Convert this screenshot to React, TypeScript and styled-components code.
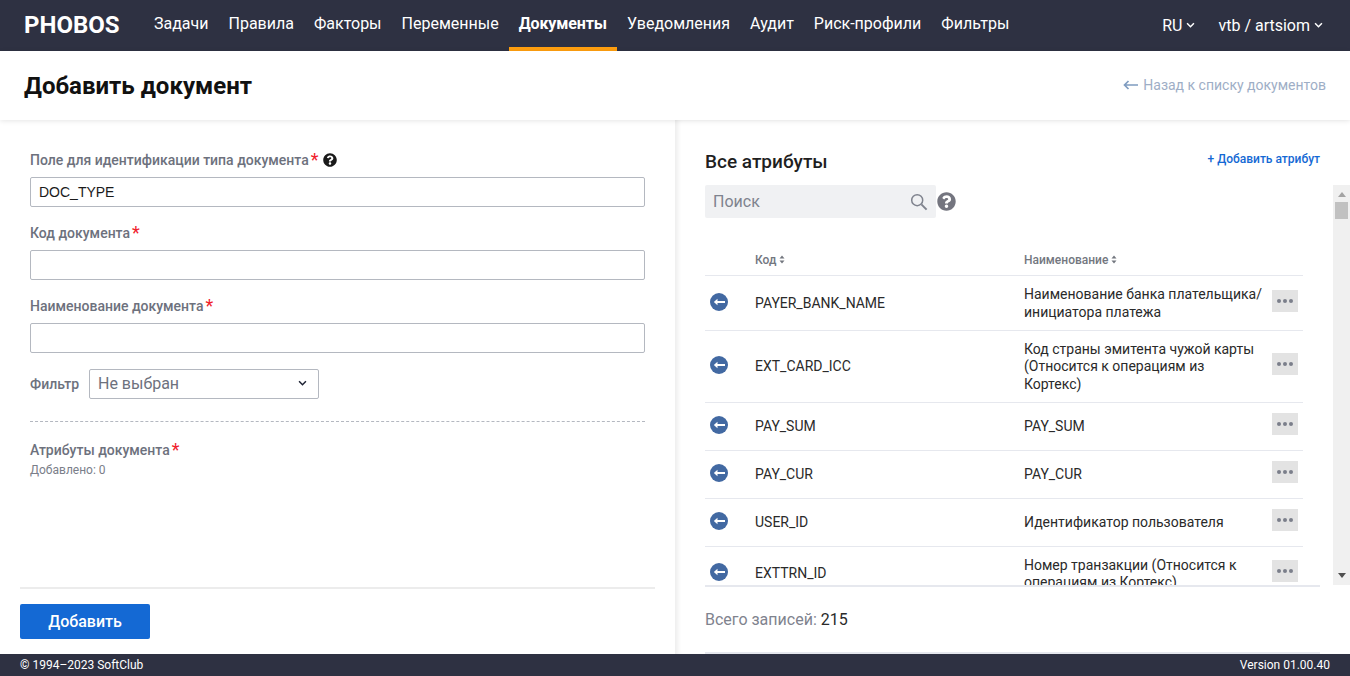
import React from "react";
import styled, { createGlobalStyle } from "styled-components";
import { FaQuestionCircle } from "react-icons/fa";

const Global = createGlobalStyle`
  html, body { margin: 0; padding: 0; background: #fff; }
  body { font-family: Roboto, "Liberation Sans", sans-serif; overflow: hidden; }
  * { box-sizing: border-box; }
`;

const Page = styled.div`
  width: 1350px; height: 676px; display: flex; flex-direction: column; overflow: hidden;
`;
const Header = styled.header`
  flex: 0 0 51px; background: #2e3142; display: flex; align-items: stretch; padding: 0 27px 0 24px; color: #fff;
`;
const Logo = styled.div`
  font-size: 24px; font-weight: 700; line-height: 51px; width: 120px;
`;
const Nav = styled.nav`
  display: flex; flex: 1;
`;
const NavItem = styled.a<{ $active?: boolean }>`
  padding: 0 10px; display: flex; align-items: center; font-size: 16px; line-height: 20px; height: 51px;
  font-weight: ${p => (p.$active ? 700 : 400)};
  letter-spacing: ${p => (p.$active ? "-0.1px" : "0")};
  border-bottom: 4px solid ${p => (p.$active ? "#ff9f0f" : "transparent")};
`;
const HeaderMenu = styled.div<{ $gap: number }>`
  display: flex; align-items: center; gap: 4px; font-size: 16px; margin-left: ${p => p.$gap}px; padding-bottom: 1px;
`;
const TitleBar = styled.div`
  flex: 0 0 69px; display: flex; align-items: center; justify-content: space-between; padding: 0 24px;
  background: #fff; box-shadow: 0 1px 5px rgba(0,0,0,.1); position: relative; z-index: 1;
`;
const Title = styled.h1`
  margin: 0; font-size: 24px; font-weight: 700; color: #111; line-height: 30px;
`;
const BackLink = styled.a`
  display: flex; align-items: center; gap: 5px; color: #9eaec6; font-size: 14px; padding-bottom: 2px;
`;
const Main = styled.main`
  flex: 1; display: flex; min-height: 0;
`;
const LeftPanel = styled.section`
  flex: 0 0 675px; display: flex; flex-direction: column;
`;
const Form = styled.div`
  flex: 1; padding: 30px 30px 0;
`;
const Label = styled.div`
  display: flex; align-items: center; height: 20px; margin-bottom: 7px; font-size: 14px; font-weight: 500; color: #6d717d;
`;
const Star = styled.span`
  color: #f0212c; font-size: 18px; line-height: 20px; margin-left: 2px; font-weight: 400; height: 20px;
`;
const HelpDark = styled.span`
  display: inline-flex; margin-left: 4px; color: #1a1a1a; font-size: 14px;
`;
const Input = styled.div`
  height: 30px; border: 1px solid #b4b8c0; border-radius: 2px; margin-bottom: 16px; padding: 0 8px;
  font-family: "Liberation Sans", Arial, sans-serif; font-size: 14px; line-height: 28px; color: #1a1a1a;
`;
const FilterRow = styled.div`
  display: flex; align-items: center; gap: 10px;
`;
const FilterLabel = styled.span`
  font-size: 14px; font-weight: 500; color: #6d717d; width: 49px;
`;
const Select = styled.div`
  width: 230px; height: 30px; border: 1px solid #b4b8c0; border-radius: 2px; padding: 0 11px 1px 8px;
  display: flex; align-items: center; justify-content: space-between; font-size: 16px; color: #6d717d;
`;
const Dashed = styled.div`
  border-top: 1px dashed #b4b8c0; margin: 22px 0 18px;
`;
const AttrLabel = styled(Label)`
  margin-bottom: 2px;
`;
const Added = styled.div`
  font-size: 12px; color: #7a7e89; line-height: 16px;
`;
const FormFooter = styled.div`
  margin: 0 20px; border-top: 2px solid #ececec; padding: 15px 0;
`;
const PrimaryButton = styled.button`
  width: 130px; height: 35px; display: block; border: 0; border-radius: 2px; background: #1469d4; color: #fff;
  font-family: inherit; font-size: 16px; font-weight: 500;
`;
const RightPanel = styled.section`
  flex: 1; padding-left: 30px; display: flex; flex-direction: column; min-width: 0;
  box-shadow: inset 5px 0 4px -2px rgba(0,0,0,.07);
`;
const RightHead = styled.div`
  width: 615px; height: 65px; padding-top: 30px; display: flex; justify-content: space-between;
`;
const RightTitle = styled.h2`
  margin: 0; font-size: 19px; font-weight: 500; line-height: 24px; color: #1f1f1f;
`;
const AddLink = styled.a`
  color: #1469d4; font-size: 12px; font-weight: 500; line-height: 16px; margin-top: 1px;
`;
const ListFrame = styled.div`
  display: flex; align-items: flex-start;
`;
const ListBody = styled.div`
  flex: 0 0 615px; height: 402px; overflow: hidden; border-bottom: 2px solid #e6e8ee;
`;
const SearchRow = styled.div`
  display: flex; align-items: center; gap: 2px; height: 33px;
`;
const SearchBox = styled.div`
  width: 231px; height: 33px; background: #f0f1f3; border-radius: 2px; padding: 0 8px;
  display: flex; align-items: center; justify-content: space-between; color: #7f838e; font-size: 16px;
`;
const HelpGrey = styled.span`
  display: inline-flex; color: #74757f; font-size: 19px; margin-left: -1px;
`;
const Table = styled.div`
  width: 598px; margin-top: 24px;
`;
const HeadRow = styled.div`
  display: grid; grid-template-columns: 50px 269px 1fr; height: 34px; padding-top: 2px; align-items: center;
  border-bottom: 1px solid #e6e8ee; font-size: 12px; font-weight: 500; color: #73777f;
`;
const HeadCell = styled.span`
  display: flex; align-items: center; gap: 3px;
`;
const Row = styled.div`
  display: grid; grid-template-columns: 50px 269px 248px 26px; min-height: 48px; padding: 10px 0 8.5px;
  align-items: center; border-bottom: 1px solid #e6e8ee; font-size: 14px; line-height: 17.5px; color: #2a2a2a;
`;
const RowIcon = styled.span`
  display: flex; padding-left: 5px; margin-bottom: 4px;
`;
const NameCell = styled.span`
  padding-right: 8px;
`;
const More = styled.span`
  width: 26px; height: 22px; background: #e3e3e3; display: flex; align-items: center; justify-content: center; margin-bottom: 6px;
`;
const Scrollbar = styled.div`
  flex: 0 0 17px; height: 400px; margin-left: 13px; background: #f0f0f0; position: relative;
`;
const ScrollThumb = styled.div`
  position: absolute; left: 2px; top: 17px; width: 13px; height: 17px; background: #c1c1c1;
`;
const ScrollUp = styled.div`
  position: absolute; top: 7px; left: 5px; border: 4px solid transparent; border-top: 0; border-bottom: 5px solid #a3a3a3;
`;
const ScrollDown = styled.div`
  position: absolute; bottom: 7px; left: 5px; border: 4px solid transparent; border-bottom: 0; border-top: 5px solid #505050;
`;
const Total = styled.div`
  width: 615px; height: 67px; border-bottom: 2px solid #e6e8ee; padding-top: 23px; font-size: 16px; line-height: 20px; color: #7f838e;
`;
const TotalValue = styled.span`
  color: #2a2a2a;
`;
const Footer = styled.footer`
  flex: 0 0 22px; background: #2e3142; color: #fff; display: flex; justify-content: space-between; align-items: center;
  padding: 0 20px; font-size: 12px; font-weight: 400;
`;

const Chevron = ({ color = "#fff", w = 9 }: { color?: string; w?: number }) => (
  <svg width={w} height={w * 0.7} viewBox="0 0 10 7" fill="none">
    <path d="M1.2 1.4 5 5.2l3.8-3.8" stroke={color} strokeWidth="1.7" />
  </svg>
);
const BackArrow = () => (
  <svg width="15" height="10" viewBox="0 0 15 10" fill="none">
    <path d="M15 5H2M5.5 1 1.5 5l4 4" stroke="#7f9cc0" strokeWidth="1.7" />
  </svg>
);
const Sort = () => (
  <svg width="6" height="9" viewBox="0 0 6 9" fill="#73777f">
    <path d="M3 0.5 5.5 3.5H.5zM3 8.5.5 5.5h5z" />
  </svg>
);
const Lens = () => (
  <svg width="18" height="18" viewBox="0 0 18 18" fill="none" stroke="#7f838e">
    <circle cx="7.2" cy="7.2" r="5.5" strokeWidth="1.5" />
    <path d="m11.4 11.4 5.2 5.2" strokeWidth="2" />
  </svg>
);
const RemoveIcon = () => (
  <svg width="18" height="18" viewBox="0 0 18 18">
    <circle cx="9" cy="9" r="9" fill="#4269a2" />
    <path d="M15 9H5.5" stroke="#fff" strokeWidth="2" />
    <path d="M7.5 5.8 3.8 9l3.7 3.2z" fill="#fff" />
  </svg>
);
const Dots = () => (
  <svg width="16" height="4" viewBox="0 0 16 4" fill="#7b7f8b">
    <circle cx="2" cy="2" r="2" /><circle cx="8" cy="2" r="2" /><circle cx="14" cy="2" r="2" />
  </svg>
);

const nav = ["Задачи", "Правила", "Факторы", "Переменные", "Документы", "Уведомления", "Аудит", "Риск-профили", "Фильтры"];
const rows: [string, string][] = [
  ["PAYER_BANK_NAME", "Наименование банка плательщика/ инициатора платежа"],
  ["EXT_CARD_ICC", "Код страны эмитента чужой карты (Относится к операциям из Кортекс)"],
  ["PAY_SUM", "PAY_SUM"],
  ["PAY_CUR", "PAY_CUR"],
  ["USER_ID", "Идентификатор пользователя"],
  ["EXTTRN_ID", "Номер транзакции (Относится к операциям из Кортекс)"],
];

export default function App() {
  return (
    <Page>
      <Global />
      <Header>
        <Logo>PHOBOS</Logo>
        <Nav>
          {nav.map(n => <NavItem key={n} $active={n === "Документы"}>{n}</NavItem>)}
        </Nav>
        <HeaderMenu $gap={0}>RU <Chevron /></HeaderMenu>
        <HeaderMenu $gap={23}>vtb / artsiom <Chevron /></HeaderMenu>
      </Header>
      <TitleBar>
        <Title>Добавить документ</Title>
        <BackLink><BackArrow />Назад к списку документов</BackLink>
      </TitleBar>
      <Main>
        <LeftPanel>
          <Form>
            <Label>Поле для идентификации типа документа<Star>*</Star><HelpDark><FaQuestionCircle /></HelpDark></Label>
            <Input>DOC_TYPE</Input>
            <Label>Код документа<Star>*</Star></Label>
            <Input />
            <Label>Наименование документа<Star>*</Star></Label>
            <Input />
            <FilterRow>
              <FilterLabel>Фильтр</FilterLabel>
              <Select>Не выбран<Chevron color="#1d2233" /></Select>
            </FilterRow>
            <Dashed />
            <AttrLabel>Атрибуты документа<Star>*</Star></AttrLabel>
            <Added>Добавлено: 0</Added>
          </Form>
          <FormFooter>
            <PrimaryButton>Добавить</PrimaryButton>
          </FormFooter>
        </LeftPanel>
        <RightPanel>
          <RightHead>
            <RightTitle>Все атрибуты</RightTitle>
            <AddLink>+ Добавить атрибут</AddLink>
          </RightHead>
          <ListFrame>
            <ListBody>
              <SearchRow>
                <SearchBox>Поиск<Lens /></SearchBox>
                <HelpGrey><FaQuestionCircle /></HelpGrey>
              </SearchRow>
              <Table>
                <HeadRow>
                  <span />
                  <HeadCell>Код <Sort /></HeadCell>
                  <HeadCell>Наименование <Sort /></HeadCell>
                </HeadRow>
                {rows.map(([code, name]) => (
                  <Row key={code}>
                    <RowIcon><RemoveIcon /></RowIcon>
                    <span>{code}</span>
                    <NameCell>{name}</NameCell>
                    <More><Dots /></More>
                  </Row>
                ))}
              </Table>
            </ListBody>
            <Scrollbar>
              <ScrollUp />
              <ScrollThumb />
              <ScrollDown />
            </Scrollbar>
          </ListFrame>
          <Total>Всего записей: <TotalValue>215</TotalValue></Total>
        </RightPanel>
      </Main>
      <Footer>
        <span>© 1994–2023 SoftClub</span>
        <span>Version 01.00.40</span>
      </Footer>
    </Page>
  );
}
